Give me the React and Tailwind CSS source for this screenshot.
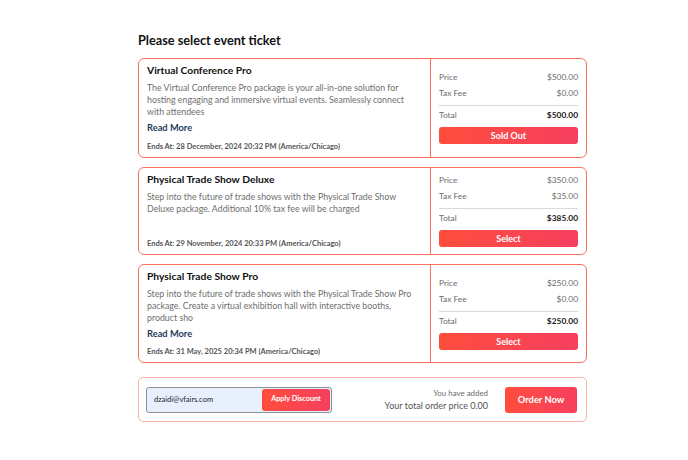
import React from "react";

const tickets = [
  {
    title: "Virtual Conference Pro",
    desc: "The Virtual Conference Pro package is your all-in-one solution for hosting engaging and immersive virtual events. Seamlessly connect with attendees",
    readMore: true,
    ends: "Ends At: 28 December, 2024 20:32 PM (America/Chicago)",
    price: "$500.00",
    tax: "$0.00",
    total: "$500.00",
    btn: "Sold Out",
    h: "h-[100px]",
  },
  {
    title: "Physical Trade Show Deluxe",
    desc: "Step into the future of trade shows with the Physical Trade Show Deluxe package. Additional 10% tax fee will be charged",
    readMore: false,
    ends: "Ends At: 29 November, 2024 20:33 PM (America/Chicago)",
    price: "$350.00",
    tax: "$35.00",
    total: "$385.00",
    btn: "Select",
    h: "h-[88px]",
  },
  {
    title: "Physical Trade Show Pro",
    desc: "Step into the future of trade shows with the Physical Trade Show Pro package. Create a virtual exhibition hall with interactive booths, product sho",
    readMore: true,
    ends: "Ends At: 31 May, 2025 20:34 PM (America/Chicago)",
    price: "$250.00",
    tax: "$0.00",
    total: "$250.00",
    btn: "Select",
    h: "h-[99px]",
  },
];

function Card({ t }) {
  return (
    <div className={`flex ${t.h} rounded-[6px] border-[1.5px] border-[#f7715f] bg-white`}>
      <div className="flex w-[292px] flex-col justify-between border-r-[1.5px] border-[#f7715f] pl-[8px] pr-[11px] pt-[3.5px] pb-[5px]">
        <div>
          <div className="text-[10.3px] font-bold leading-[14px] text-[#111]">{t.title}</div>
          <p className="mt-[5px] text-[8.8px] leading-[12px] text-[#6e6e6e]">{t.desc}</p>
          {t.readMore && (
            <div className="mt-[3.5px] text-[9.3px] font-bold leading-[13px] text-[#1f3b5c]">Read More</div>
          )}
        </div>
        <div className="text-[7.5px] font-bold leading-[10px] text-[#555]">{t.ends}</div>
      </div>
      <div className="flex flex-1 flex-col justify-center px-[8px] pb-[3px]">
        <div className="flex justify-between text-[8.4px] leading-[16px] text-[#6b6b6b]">
          <span>Price</span>
          <span>{t.price}</span>
        </div>
        <div className="flex justify-between text-[8.4px] leading-[16px] text-[#6b6b6b]">
          <span>Tax Fee</span>
          <span>{t.tax}</span>
        </div>
        <div className="mt-[4px] border-t border-[#d9d9d9]" />
        <div className="mt-[1px] flex justify-between text-[8.4px] leading-[16px]">
          <span className="text-[#6b6b6b]">Total</span>
          <span className="font-bold text-[#222]">{t.total}</span>
        </div>
        <button className="mt-[4px] h-[17px] w-full rounded-[3px] bg-gradient-to-r from-[#ff4d3b] to-[#f63f5e] text-[9px] font-bold leading-[17px] text-white">
          {t.btn}
        </button>
      </div>
    </div>
  );
}

export default function App() {
  return (
    <div className="min-h-[460px] w-[688px] bg-white font-['Lato',sans-serif]">
      <div className="ml-[138px] w-[449px] pt-[32px]">
        <h1 className="text-[12.7px] font-bold leading-[16px] text-[#111]">Please select event ticket</h1>
        <div className="mt-[10px] flex flex-col gap-[9px]">
          {tickets.map((t) => (
            <Card key={t.title} t={t} />
          ))}
        </div>
        <div className="mt-[14px] flex h-[45px] items-center rounded-[5px] border border-[#fbb1a6] pl-[7px] pr-[9px]">
          <div className="flex h-[26px] w-[186px] items-center justify-between rounded-[3px] border border-[#8a8f99] bg-[#e8f0fe] pl-[7px] pr-[1px]">
            <span className="text-[7.5px] text-[#222]">dzaidi@vfairs.com</span>
            <button className="h-[22px] w-[68px] rounded-[3px] bg-gradient-to-r from-[#ff4d3b] to-[#f63f5e] text-[7.3px] font-bold text-white">
              Apply Discount
            </button>
          </div>
          <div className="ml-auto mr-[17px] flex flex-col items-end">
            <span className="text-[7.9px] leading-[12px] text-[#6b6b6b]">You have added</span>
            <span className="text-[9px] leading-[14px] text-[#555]">Your total order price 0.00</span>
          </div>
          <button className="h-[26px] w-[72px] rounded-[3px] bg-gradient-to-r from-[#ff4d3b] to-[#f63f5e] text-[9.3px] font-bold text-white">
            Order Now
          </button>
        </div>
      </div>
    </div>
  );
}
